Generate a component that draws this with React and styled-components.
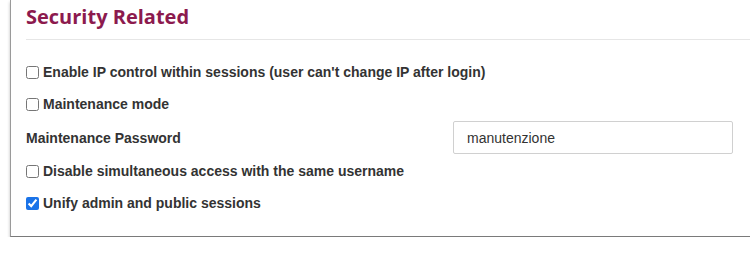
import React from "react";
import styled, { createGlobalStyle } from "styled-components";

const Global = createGlobalStyle`
  html, body { margin: 0; padding: 0; background: #fff; overflow: hidden; }
`;

const Panel = styled.section`
  margin-left: 10px;
  width: 760px;
  border-left: 1px solid #9a9a9a;
  border-bottom: 1px solid #7a7a7a;
  box-shadow: 0 2px 3px rgba(0, 0, 0, 0.25);
  padding: 3px 0 17px 15px;
  box-sizing: border-box;
  background: #fff;
`;

const Heading = styled.h2`
  margin: 0 0 16px;
  padding-bottom: 8px;
  border-bottom: 1px solid #e6e6e6;
  font-family: "Open Sans", sans-serif;
  font-weight: 700;
  font-size: 20px;
  line-height: 28px;
  color: #8c1a4e;
`;

const Rows = styled.div`
  display: flex;
  flex-direction: column;
`;

const CheckRow = styled.label`
  display: flex;
  align-items: center;
  gap: 4px;
  height: 32px;
  font-family: "Liberation Sans", Arial, sans-serif;
  font-weight: 700;
  font-size: 14px;
  color: #333;
`;

const Box = styled.input`
  margin: 0;
  width: 13px;
  height: 13px;
  accent-color: #1a73e8;
`;

const FieldRow = styled.div`
  display: grid;
  grid-template-columns: 427px 280px;
  align-items: center;
  height: 35px;
  font-family: "Liberation Sans", Arial, sans-serif;
  font-weight: 700;
  font-size: 14px;
  color: #333;
`;

const TextInput = styled.input`
  box-sizing: border-box;
  height: 33px;
  width: 280px;
  border: 1px solid #d0d0d0;
  border-radius: 2px;
  padding: 0 13px;
  font-family: "Liberation Sans", Arial, sans-serif;
  font-size: 14px;
  color: #333;
  outline: none;
`;

export default function App() {
  return (
    <>
      <Global />
      <Panel>
        <Heading>Security Related</Heading>
        <Rows>
          <CheckRow>
            <Box type="checkbox" />
            Enable IP control within sessions (user can't change IP after login)
          </CheckRow>
          <CheckRow>
            <Box type="checkbox" />
            Maintenance mode
          </CheckRow>
          <FieldRow>
            <span>Maintenance Password</span>
            <TextInput defaultValue="manutenzione" />
          </FieldRow>
          <CheckRow>
            <Box type="checkbox" />
            Disable simultaneous access with the same username
          </CheckRow>
          <CheckRow>
            <Box type="checkbox" defaultChecked />
            Unify admin and public sessions
          </CheckRow>
        </Rows>
      </Panel>
    </>
  );
}
